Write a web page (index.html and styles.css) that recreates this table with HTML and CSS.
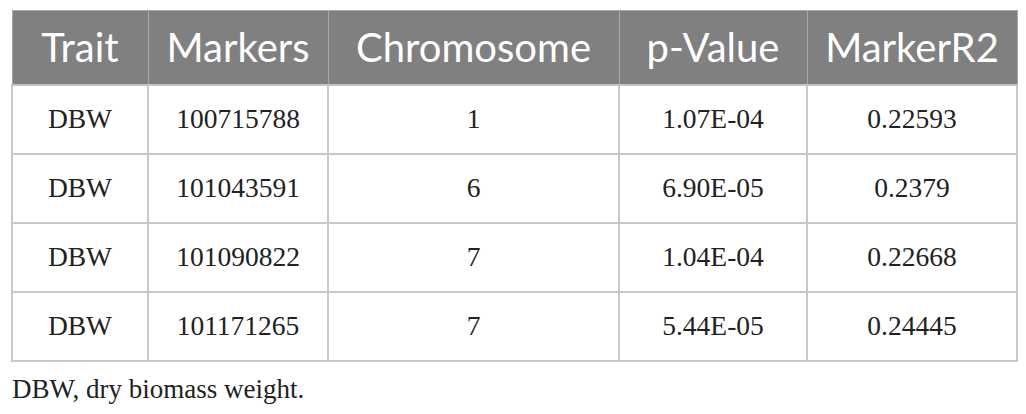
FILE: index.html
```html
<!DOCTYPE html>
<html>
<head>
<meta charset="utf-8">
<link rel="stylesheet" href="styles.css">
</head>
<body>
<div class="wrap">
<table class="data">
  <colgroup>
    <col class="c1"><col class="c2"><col class="c3"><col class="c4"><col class="c5">
  </colgroup>
  <thead>
    <tr><th>Trait</th><th>Markers</th><th>Chromosome</th><th>p-Value</th><th>MarkerR2</th></tr>
  </thead>
  <tbody>
    <tr><td>DBW</td><td>100715788</td><td>1</td><td>1.07E-04</td><td>0.22593</td></tr>
    <tr><td>DBW</td><td>101043591</td><td>6</td><td>6.90E-05</td><td>0.2379</td></tr>
    <tr><td>DBW</td><td>101090822</td><td>7</td><td>1.04E-04</td><td>0.22668</td></tr>
    <tr><td>DBW</td><td>101171265</td><td>7</td><td>5.44E-05</td><td>0.24445</td></tr>
  </tbody>
</table>
<p class="note">DBW, dry biomass weight.</p>
</div>
</body>
</html>
```
FILE: styles.css
```css
html, body {
  margin: 0;
  padding: 0;
  background: #ffffff;
}
.wrap {
  padding: 10px 0 0 11px;
}
.data {
  border-collapse: collapse;
  table-layout: fixed;
  width: 1005px;
}
.c1 { width: 136px; }
.c2 { width: 180px; }
.c3 { width: 291px; }
.c4 { width: 188px; }
.c5 { width: 210px; }
.data th {
  background: #808080;
  color: #ffffff;
  font-family: "Lato", "Open Sans", sans-serif;
  font-weight: 400;
  font-size: 40px;
  height: 74px;
  padding: 0;
  text-align: center;
  vertical-align: middle;
  border: 1px solid #a8a8a8;
  border-bottom: 2px solid #c4c4c4;
  box-sizing: border-box;
}
.data td {
  font-family: "Liberation Serif", "Times New Roman", serif;
  font-size: 27.5px;
  color: #222222;
  height: 69px;
  padding: 0;
  text-align: center;
  vertical-align: middle;
  border: 2px solid #c8c8c8;
  box-sizing: border-box;
}
.note {
  margin: 12px 0 0 1px;
  font-family: "Liberation Serif", "Times New Roman", serif;
  font-size: 27px;
  color: #222222;
}
```
